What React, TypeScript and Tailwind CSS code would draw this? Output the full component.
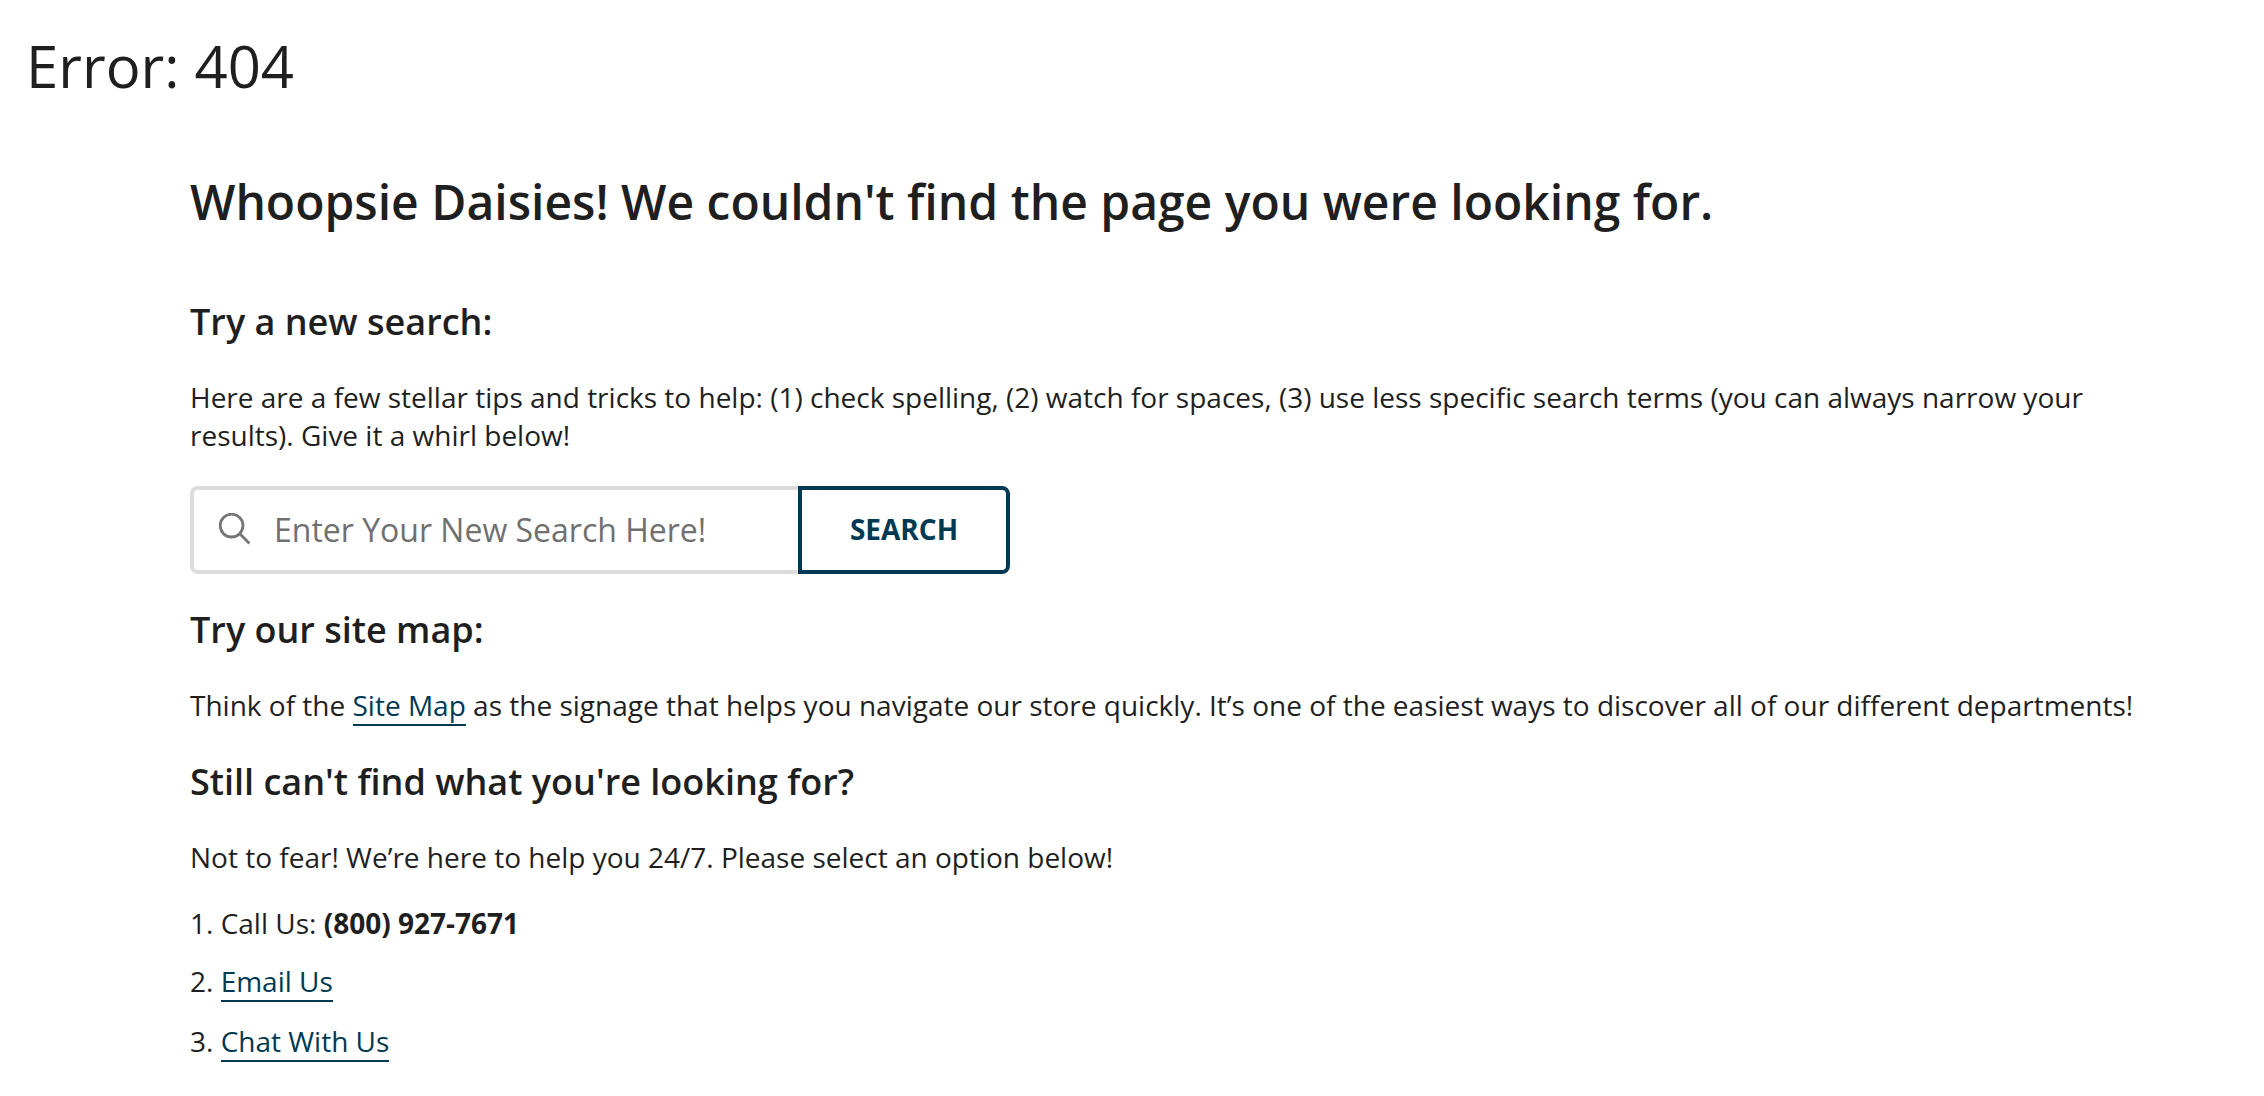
import React, { useState } from 'react';

const linkClass = "inline-block text-[#003953] border-b-2 border-[#003953]";
const headingClass = "text-[36px] leading-[48px] font-semibold mt-8";
const textClass = "mt-8";

const SearchIcon = () => (
  <svg width="32" height="32" viewBox="0 0 32 32" fill="none" stroke="#767676" strokeWidth="2.8" className="shrink-0 mb-0.5" aria-hidden="true">
    <circle cx="12.6" cy="12.6" r="11.4" />
    <path d="M20.8 20.8L30.4 30.4" />
  </svg>
);

const SearchForm = () => {
  const [term, setTerm] = useState('');

  return (
    <form className="flex mt-8 h-[88px] max-w-[820px]" onSubmit={e => e.preventDefault()}>
      <label className="flex flex-1 min-w-0 items-center gap-[23px] pl-[25px] pr-4 pb-px border-4 border-r-0 border-[#dcdcdc] rounded-l-lg">
        <SearchIcon />
        <input
          type="text"
          aria-label="Enter Your New Search Here!"
          placeholder="Enter Your New Search Here!"
          className="flex-1 min-w-0 text-[32px] leading-[44px] outline-none placeholder:text-[#707070]"
          value={term}
          onChange={e => setTerm(e.target.value)}
        />
      </label>
      <button type="submit" className="w-[212px] shrink-0 pb-0.5 border-4 border-[#003953] rounded-r-lg text-[#003953] font-bold">SEARCH</button>
    </form>
  );
};

const App = () => {
  return (
    <main className="min-h-screen bg-white px-[26px] pt-[26px] pb-8 font-['Open_Sans',sans-serif] text-[28px] leading-[38px] text-[#1f1f1f]">
      <h1 className="text-[58px] leading-[80px]">Error: 404</h1>

      <div className="mt-16 ml-[164px] mr-20">
        <h2 className="text-[48px] leading-[64px] font-semibold mb-16">Whoopsie Daisies! We couldn't find the page you were looking for.</h2>

        <section>
          <h3 className={headingClass}>Try a new search:</h3>
          <p className={textClass}>Here are a few stellar tips and tricks to help: (1) check spelling, (2) watch for spaces, (3) use less specific search terms (you can always narrow your results). Give it a whirl below!</p>
          <SearchForm />
        </section>

        <section>
          <h3 className={headingClass}>Try our site map:</h3>
          <p className={textClass}>Think of the <a href="#sitemap" className={linkClass}>Site Map</a> as the signage that helps you navigate our store quickly. It’s one of the easiest ways to discover all of our different departments!</p>
        </section>

        <section>
          <h3 className={headingClass}>Still can't find what you're looking for?</h3>
          <p className={textClass}>Not to fear! We’re here to help you 24/7. Please select an option below!</p>
          <ol className="list-decimal list-inside mt-7 space-y-5">
            <li>Call Us: <strong>(800) 927-7671</strong></li>
            <li><a href="#email" className={linkClass}>Email Us</a></li>
            <li><a href="#chat" className={linkClass}>Chat With Us</a></li>
          </ol>
        </section>
      </div>
    </main>
  );
};
export default App;
